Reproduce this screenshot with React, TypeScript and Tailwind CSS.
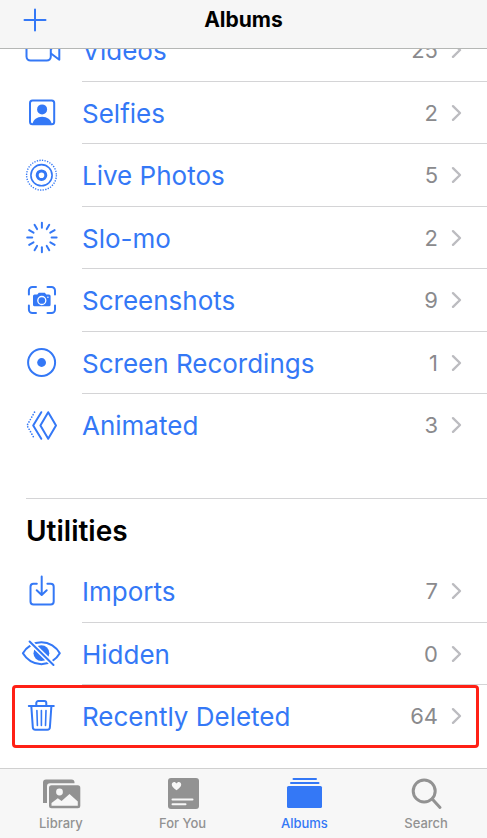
import type { ReactNode } from 'react';
import clsx from 'clsx';

interface AlbumRow {
    name: string;
    count: number;
    icon: ReactNode;
    highlighted?: boolean;
}

interface IconProps {
    children: ReactNode;
}

function RowIcon({ children }: IconProps) {
    return (
        <svg
            viewBox="0 0 40 40"
            className="h-10 w-10 shrink-0"
            fill="none"
            stroke="currentColor"
            strokeWidth="2"
            strokeLinecap="round"
            strokeLinejoin="round"
            aria-hidden="true"
        >
            {children}
        </svg>
    );
}

function VideoIcon() {
    return (
        <RowIcon>
            <rect x="5.5" y="12" width="24.3" height="18.6" rx="4" />
            <path d="M30 23.5l8.300 6.200V13L30 19" />
        </RowIcon>
    );
}

function SelfieIcon() {
    return (
        <RowIcon>
            <rect x="9" y="8.4" width="24.200" height="23.800" rx="2.5" />
            <circle cx="21.1" cy="17.4" r="5" fill="currentColor" stroke="none" />
            <path d="M11.5 32c.6-4.400 4.600-7.300 9.600-7.300s9 2.900 9.600 7.300z" fill="currentColor" stroke="none" />
        </RowIcon>
    );
}

function LivePhotoIcon() {
    return (
        <RowIcon>
            <circle cx="20.5" cy="20.2" r="14.9" strokeWidth="1.4" strokeDasharray="1.3 1.3" strokeLinecap="butt" />
            <circle cx="20.5" cy="20.2" r="10.6" strokeWidth="1.6" />
            <circle cx="20.5" cy="20.2" r="4.3" strokeWidth="3" />
        </RowIcon>
    );
}

function SloMoIcon() {
    const angles = [0, 30, 60, 90, 120, 150, 180, 210, 240, 270, 300, 330];

    return (
        <RowIcon>
            {angles.map((angle) => (
                <path key={angle} d="M20.9 5.800v5" transform={`rotate(${angle} 20.9 20.500)`} />
            ))}
        </RowIcon>
    );
}

function ScreenshotIcon() {
    return (
        <RowIcon>
            <path d="M7.9 14.500V10.500A3.500 3.500 0 0 1 11.400 7H15M26.500 7h4a3.500 3.500 0 0 1 3.500 3.500v4M34 25.500v4a3.500 3.500 0 0 1-3.500 3.500h-4M15 33h-3.600a3.500 3.500 0 0 1-3.500-3.500v-4" />
            <path d="M13.600 14.500h2.700l1.500-1.800h6l1.500 1.800H28a1.600 1.600 0 0 1 1.600 1.600v8.600a1.600 1.600 0 0 1-1.600 1.600H13.600a1.600 1.600 0 0 1-1.600-1.600v-8.600a1.600 1.600 0 0 1 1.600-1.600z" fill="currentColor" stroke="none" />
            <circle cx="20.800" cy="20.500" r="4" stroke="white" strokeWidth="1.300" />
            <circle cx="26.900" cy="17.200" r=".8" fill="white" stroke="none" />
        </RowIcon>
    );
}

function RecordingIcon() {
    return (
        <RowIcon>
            <circle cx="20.6" cy="20.5" r="13.5" />
            <circle cx="20.6" cy="20.5" r="4.4" fill="currentColor" stroke="none" />
        </RowIcon>
    );
}

function AnimatedIcon() {
    return (
        <RowIcon>
            <path d="M27.200 7.200 35 20.500l-7.800 13.300-7.800-13.300z" />
            <path d="M20.300 7.200 12.200 20.500l8.100 13.300" />
            <path d="M13.500 7.200 6 20.500l7.500 13.300" strokeWidth="1.700" strokeDasharray="0 2.800" />
        </RowIcon>
    );
}

function ImportIcon() {
    return (
        <RowIcon>
            <path d="M15.800 12.700h-3.300a3 3 0 0 0-3 3v14.800a3 3 0 0 0 3 3h17.200a3 3 0 0 0 3-3V15.700a3 3 0 0 0-3-3h-3.300" />
            <path d="M20.700 5.500v18M15.700 19.300l5 4.700 5-4.700" />
        </RowIcon>
    );
}

function HiddenIcon() {
    return (
        <RowIcon>
            <path d="M1.900 20.300C5.500 14 12.500 9.200 20.400 9.200S35.300 14 38.800 20.300c-3.500 6.200-10.500 10.900-18.400 10.900S5.500 26.500 1.900 20.300z" />
            <circle cx="20.400" cy="20.200" r="7.900" fill="currentColor" stroke="none" />
            <path d="M8.600 8.500 32.500 32" stroke="white" strokeWidth="5.200" strokeLinecap="butt" />
            <path d="M8.600 8.500 32.500 32" />
        </RowIcon>
    );
}

function TrashIcon() {
    return (
        <RowIcon>
            <path d="M7.800 10h25M15.300 10V7a2 2 0 0 1 2-2h6a2 2 0 0 1 2 2v3" />
            <path d="M10.300 10l1.500 21.300a2.600 2.600 0 0 0 2.600 2.500h11.900a2.600 2.600 0 0 0 2.600-2.500L30.400 10" />
            <path d="M15.900 14.500l.500 15M20.400 14.500v15M25 14.500l-.500 15" strokeWidth="1.600" />
        </RowIcon>
    );
}

const mediaTypes: AlbumRow[] = [
    { name: 'Videos', count: 25, icon: <VideoIcon /> },
    { name: 'Selfies', count: 2, icon: <SelfieIcon /> },
    { name: 'Live Photos', count: 5, icon: <LivePhotoIcon /> },
    { name: 'Slo-mo', count: 2, icon: <SloMoIcon /> },
    { name: 'Screenshots', count: 9, icon: <ScreenshotIcon /> },
    { name: 'Screen Recordings', count: 1, icon: <RecordingIcon /> },
    { name: 'Animated', count: 3, icon: <AnimatedIcon /> },
];

const utilities: AlbumRow[] = [
    { name: 'Imports', count: 7, icon: <ImportIcon /> },
    { name: 'Hidden', count: 0, icon: <HiddenIcon /> },
    { name: 'Recently Deleted', count: 64, icon: <TrashIcon />, highlighted: true },
];

function AlbumList({ rows }: { rows: AlbumRow[] }) {
    return (
        <ul>
            {rows.map((row) => (
                <li key={row.name} className="group relative h-[62px] odd:h-[63px]">
                    <a href="#" className="flex h-full items-center text-[#3478f6]">
                        <span className="flex w-[82px] shrink-0 justify-center pb-0.5">{row.icon}</span>
                        <span className="flex h-full flex-1 items-center border-b border-[#d4d4d6] pr-[25px] group-last:border-transparent">
                            <span className="flex-1 pt-0.5 text-[26px] leading-8">{row.name}</span>
                            <span className="text-[22px] leading-8 text-[#8a8a8d]">{row.count}</span>
                            <svg viewBox="0 0 12 18" className="ml-3 h-[18px] w-3" fill="none" stroke="#bcbcc0" strokeWidth="2.4" strokeLinecap="round" strokeLinejoin="round" aria-hidden="true">
                                <path d="M3 2.200 10 9l-7 6.800" />
                            </svg>
                        </span>
                    </a>
                    {row.highlighted && (
                        <span className="pointer-events-none absolute inset-y-0 right-2 left-3 rounded-[4px] border-3 border-[#ff2015]" />
                    )}
                </li>
            ))}
        </ul>
    );
}

function LibraryIcon() {
    return (
        <svg viewBox="0 0 40 34" className="h-[34px] w-10" fill="currentColor" aria-hidden="true">
            <path d="M2 26V5.500a3 3 0 0 1 3-3H30.500a3 3 0 0 1 3 3v.8H9a3 3 0 0 0-3 3V26z" />
            <rect x="8" y="8.200" width="31.300" height="23" rx="2.500" />
            <circle cx="18.500" cy="15" r="3.400" fill="#f7f7f7" />
            <path d="M10.500 28.700v-2.800l6.300-4.700 3.800 2.700 7.900-6.900 8.300 7.500v4.200z" fill="#f7f7f7" />
        </svg>
    );
}

function ForYouIcon() {
    return (
        <svg viewBox="0 0 40 34" className="h-[34px] w-10" fill="currentColor" aria-hidden="true">
            <rect x="5" y="1" width="31" height="31" rx="3" />
            <path d="M13.500 13.200C10.500 11 8.800 9.500 8.800 7.500c0-3 3.500-3.500 4.700-1 1.200-2.500 4.700-2 4.700 1 0 2-1.700 3.500-4.700 5.700z" fill="#f7f7f7" />
            <path d="M9.500 22.500h20M9.500 27.200h13" stroke="#f7f7f7" strokeWidth="2" strokeLinecap="round" />
        </svg>
    );
}

function AlbumsIcon() {
    return (
        <svg viewBox="0 0 40 34" className="h-[34px] w-10" fill="currentColor" aria-hidden="true">
            <rect x="8.500" y="1" width="24.500" height="2" rx="1" />
            <rect x="6" y="5" width="29.500" height="2" rx="1" />
            <rect x="3" y="9" width="35" height="22" rx="1.500" />
        </svg>
    );
}

function SearchIcon() {
    return (
        <svg viewBox="0 0 40 34" className="h-[34px] w-10" fill="none" stroke="currentColor" strokeWidth="3" strokeLinecap="round" aria-hidden="true">
            <circle cx="18.200" cy="14" r="11" />
            <path d="M26.200 22 34 30.500" />
        </svg>
    );
}

const tabs = [
    { label: 'Library', icon: <LibraryIcon /> },
    { label: 'For You', icon: <ForYouIcon /> },
    { label: 'Albums', icon: <AlbumsIcon />, active: true },
    { label: 'Search', icon: <SearchIcon /> },
];

export default function App() {
    return (
        <div className="flex min-h-screen flex-col bg-white font-['Inter',sans-serif]">
            <header className="z-10 grid h-[49px] grid-cols-[1fr_auto_1fr] items-start border-b border-[#b5b7b5] bg-[#f6f6f6]">
                <button type="button" aria-label="Add album" className="ml-[23px] h-10 w-6 text-[#3478f6]">
                    <svg viewBox="0 0 24 40" className="h-10 w-6" fill="none" stroke="currentColor" strokeWidth="2" strokeLinecap="round" aria-hidden="true">
                        <path d="M12 9.500v21M1.500 20h21" />
                    </svg>
                </button>
                <h1 className="text-[21px] leading-10 font-bold text-black">Albums</h1>
            </header>

            <main className="flex-1 overflow-hidden">
                {/* The list is scrolled so its first row sits partly under the header */}
                <section className="-mt-[30px]">
                    <AlbumList rows={mediaTypes} />
                </section>

                <section className="mt-[41px]">
                    <h2 className="ml-[26px] border-t border-[#d4d4d6] pt-4 pb-[13px] text-[28px] leading-8 font-semibold text-black">Utilities</h2>
                    <AlbumList rows={utilities} />
                </section>
            </main>

            <nav className="grid h-[70px] grid-cols-4 border-t border-[#d0d0d0] bg-[#f7f7f7]">
                {tabs.map((tab) => (
                    <a
                        key={tab.label}
                        href="#"
                        className={clsx('flex flex-col items-center pt-2', tab.active ? 'text-[#3478f6]' : 'text-[#929292]')}
                    >
                        {tab.icon}
                        <span className="mt-1 text-[13px] leading-4 font-medium">{tab.label}</span>
                    </a>
                ))}
            </nav>
        </div>
    );
}
